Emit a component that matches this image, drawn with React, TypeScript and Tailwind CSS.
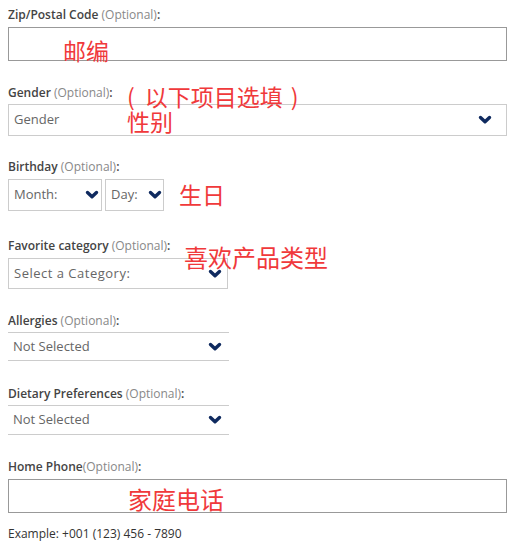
import React from "react";

const font = { fontFamily: '"Open Sans", "Noto Sans", sans-serif' };

function Chevron() {
  return (
    <svg width="14" height="10" viewBox="0 0 14 10" className="shrink-0">
      <polyline points="2.5,2.5 7,6.8 11.5,2.5" fill="none" stroke="#0f2a5f" strokeWidth="3.4" strokeLinecap="round" strokeLinejoin="round" />
    </svg>
  );
}

function Label({ name, tight }: { name: string; tight?: boolean }) {
  return (
    <div className="pt-[1px] text-[12px] leading-[16px] text-[#444] font-semibold">
      {name}
      {!tight && " "}
      <span className="font-normal text-[#888]">(Optional)</span>:
    </div>
  );
}

function SelectBox({ text, className, pr, textCls = "" }: { text: string; className: string; pr: string; textCls?: string }) {
  return (
    <div className={`flex items-center justify-between pl-[5px] text-[13px] text-[#666] ${pr} ${className}`}>
      <span className={textCls}>{text}</span>
      <Chevron />
    </div>
  );
}

const cjk = { fontFamily: '"Noto Sans CJK SC", sans-serif' };

export default function App() {
  return (
    <div className="relative w-[510px] h-[545px] bg-white overflow-hidden" style={font}>
      <div className="ml-[8px] w-[499px] pt-[6px]">
        <Label name="Zip/Postal Code" />
        <div className="mt-[4px] h-[34px] border border-[#999]"></div>

        <div className="mt-[23px]"><Label name="Gender" /></div>
        <SelectBox text="Gender" pr="pr-[14px]" className="mt-[3px] h-[32px] border border-[#ccc]" />

        <div className="mt-[22px]"><Label name="Birthday" /></div>
        <div className="mt-[4px] flex gap-[3px]">
          <SelectBox text="Month:" pr="pr-[2px]" className="w-[94px] h-[32px] border border-[#ccc]" />
          <SelectBox text="Day:" pr="pr-[1px]" className="w-[59px] h-[32px] border border-[#ccc]" />
        </div>

        <div className="mt-[26px]"><Label name="Favorite category" /></div>
        <SelectBox text="Select a Category:" textCls="tracking-[0.5px]" pr="pr-[5px]" className="mt-[4px] w-[220px] h-[31px] border border-[#ccc]" />

        <div className="mt-[23px]"><Label name="Allergies" /></div>
        <SelectBox text="Not Selected" pr="pr-[7px]" className="mt-[3px] w-[221px] h-[29px] border-y border-[#ccc]" />

        <div className="mt-[24px]"><Label name="Dietary Preferences" /></div>
        <SelectBox text="Not Selected" pr="pr-[7px]" className="mt-[3px] w-[221px] h-[30px] border-y border-[#ccc]" />

        <div className="mt-[23px]"><Label name="Home Phone" tight /></div>
        <div className="mt-[4px] h-[34px] border border-[#999]"></div>

        <div className="mt-[13px] text-[12px] leading-[16px] text-[#333]">Example: +001 (123) 456 - 7890</div>
      </div>

      <div className="absolute left-[63px] top-[35px] text-[23px] leading-[30px] text-[#f0393b]" style={cjk}>邮编</div>
      <div className="absolute left-[127px] top-[84px] text-[23px] leading-[25px] text-[#f0393b]" style={cjk}>
        <div className="flex">
          <span>(</span>
          <span className="ml-[10px]">以下项目选填</span>
          <span className="ml-[8px]">)</span>
        </div>
        <div>性别</div>
      </div>
      <div className="absolute left-[179px] top-[179px] text-[23px] leading-[30px] text-[#f0393b]" style={cjk}>生日</div>
      <div className="absolute left-[184px] top-[242px] text-[24px] leading-[30px] text-[#f0393b]" style={cjk}>喜欢产品类型</div>
      <div className="absolute left-[128px] top-[484px] text-[24px] leading-[30px] text-[#f0393b]" style={cjk}>家庭电话</div>
    </div>
  );
}
